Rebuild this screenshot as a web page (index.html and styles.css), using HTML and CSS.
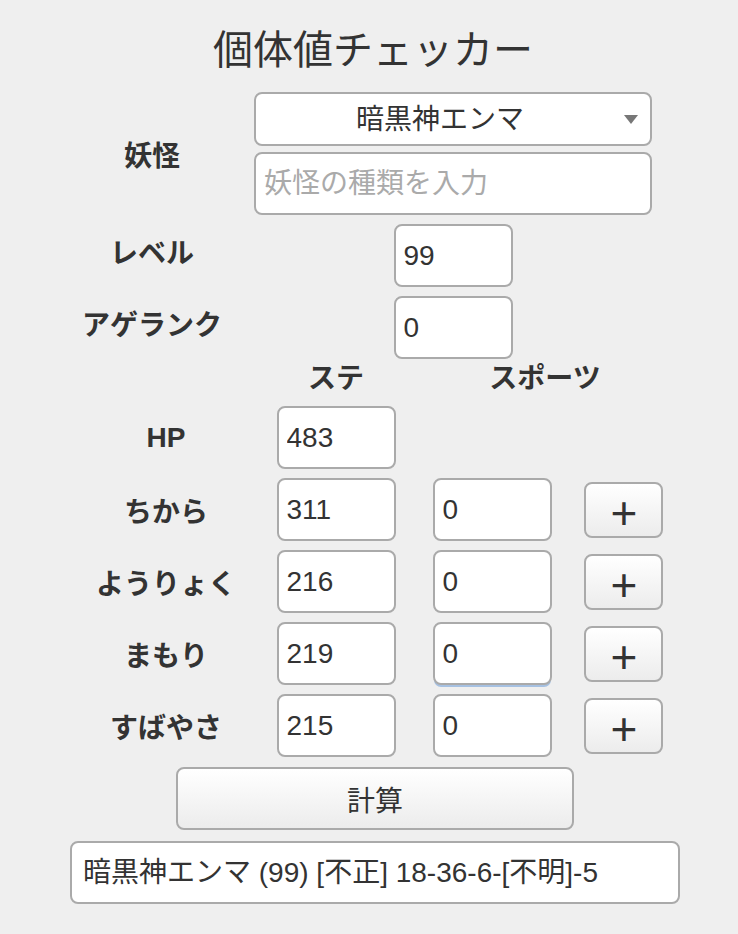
FILE: index.html
```html
<!DOCTYPE html>
<html lang="ja">
<head>
    <meta charset="UTF-8">
    <meta name="viewport" content="width=device-width, initial-scale=1.0">
    <title>個体値チェッカー</title>
    <link rel="stylesheet" href="styles.css">
</head>
<body>
    <h1 class="title">個体値チェッカー</h1>

    <div class="basic">
        <div class="label label-youkai">妖怪</div>
        <div class="select-wrap">
            <select class="field select">
                <option>暗黒神エンマ</option>
            </select>
            <span class="arrow"></span>
        </div>
        <input class="field wide" type="text" placeholder="妖怪の種類を入力">

        <div class="label">レベル</div>
        <input class="field small" type="text" value="99">

        <div class="label">アゲランク</div>
        <input class="field small" type="text" value="0">
    </div>

    <div class="stats">
        <div></div>
        <div class="head">ステ</div>
        <div class="head head-sp">スポーツ</div>

        <div class="label">HP</div>
        <input class="field small" type="text" value="483">
        <div></div>
        <div></div>

        <div class="label">ちから</div>
        <input class="field small" type="text" value="311">
        <input class="field small" type="text" value="0">
        <button class="btn plus">+</button>

        <div class="label">ようりょく</div>
        <input class="field small" type="text" value="216">
        <input class="field small" type="text" value="0">
        <button class="btn plus">+</button>

        <div class="label">まもり</div>
        <input class="field small" type="text" value="219">
        <input class="field small focused" type="text" value="0">
        <button class="btn plus">+</button>

        <div class="label">すばやさ</div>
        <input class="field small" type="text" value="215">
        <input class="field small" type="text" value="0">
        <button class="btn plus">+</button>
    </div>

    <div class="actions">
        <button class="btn calc">計算</button>
    </div>

    <div class="result">暗黒神エンマ (99) [不正] 18-36-6-[不明]-5</div>
</body>
</html>
```

FILE: styles.css
```css
body{
    margin: 0;
    background: #efefef;
    color: #333;
    font-family: "Liberation Sans", "Noto Sans CJK JP", sans-serif;
    font-size: 28px;
}
.title{
    margin: 26px 0 0;
    height: 48px;
    line-height: 48px;
    text-align: center;
    font-size: 40px;
    font-weight: normal;
    padding-left: 8px;
}
.field{
    box-sizing: border-box;
    height: 63px;
    border: 2px solid #aaa;
    border-radius: 8px;
    background: #fff;
    color: #333;
    font-family: inherit;
    font-size: 28px;
    padding: 0 8px;
    outline: none;
}
.field::placeholder{
    color: #aaa;
}
.small{
    width: 119px;
}
.wide{
    width: 398px;
}
.label{
    font-weight: bold;
    text-align: center;
}

/* 妖怪・レベル・アゲランク */
.basic{
    display: grid;
    grid-template-columns: 200px 398px;
    column-gap: 2px;
    align-items: center;
    margin: 18px 0 0 52px;
}
.basic .label-youkai{
    grid-row: 1 / span 2;
}
.basic .small{
    justify-self: center;
    margin-top: 9px;
}
.basic .wide{
    margin-top: 6px;
}
.select-wrap{
    position: relative;
}
.select{
    width: 398px;
    height: 54px;
    appearance: none;
    -webkit-appearance: none;
    text-align: center;
    text-align-last: center;
    padding: 0 34px 0 8px;
}
.arrow{
    position: absolute;
    right: 14px;
    top: 23px;
    width: 0;
    height: 0;
    border-left: 7px solid transparent;
    border-right: 7px solid transparent;
    border-top: 9px solid #777;
}

/* ステータス */
.stats{
    display: grid;
    grid-template-columns: 192px 148px 164px 98px;
    grid-template-rows: 36px;
    grid-auto-rows: 63px;
    row-gap: 9px;
    align-items: center;
    justify-items: center;
    margin: 2px 0 0 70px;
}
.stats .head{
    font-weight: bold;
    align-self: start;
    line-height: 36px;
}
.stats > .head:first-of-type{
    padding-right: 4px;
}
.head-sp{
    grid-column: 3 / span 2;
    padding-left: 8px;
}
.focused{
    box-shadow: 0 3px 0 -1px #a6c1e2;
}

.btn{
    box-sizing: border-box;
    border: 2px solid #aaa;
    border-radius: 8px;
    background: linear-gradient(#fff, #ececec);
    color: #333;
    font-family: inherit;
    font-size: 28px;
}
.plus{
    width: 79px;
    height: 56px;
    font-size: 46px;
    line-height: 1;
    padding: 6px 0 0 2px;
}

.actions{
    display: flex;
    justify-content: center;
    margin-top: 10px;
    padding-left: 12px;
}
.calc{
    width: 398px;
    height: 63px;
}

.result{
    box-sizing: border-box;
    width: 610px;
    height: 63px;
    margin: 11px 0 0 70px;
    padding: 0 11px;
    line-height: 59px;
    border: 2px solid #aaa;
    border-radius: 8px;
    background: #fff;
    white-space: nowrap;
}
```
